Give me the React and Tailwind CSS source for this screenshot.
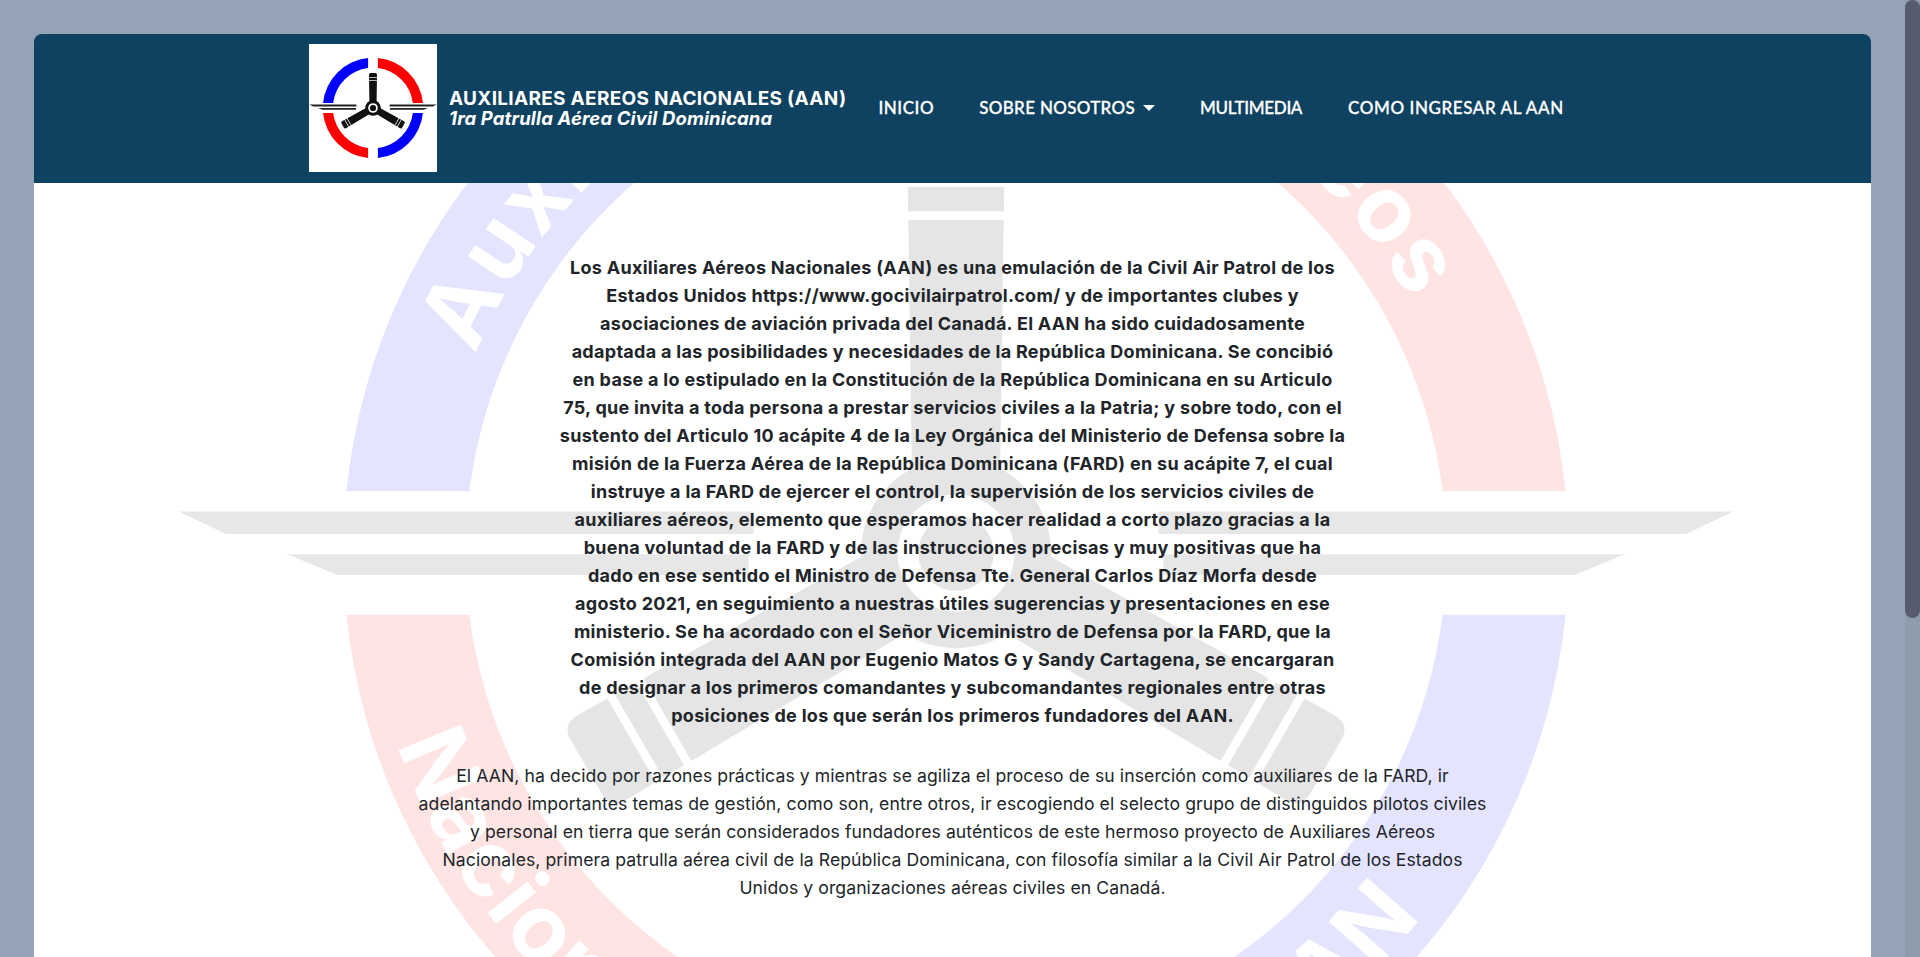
import React from "react";

const boldLines = [
  "Los Auxiliares Aéreos Nacionales (AAN) es una emulación de la Civil Air Patrol de los",
  "Estados Unidos https://www.gocivilairpatrol.com/ y de importantes clubes y",
  "asociaciones de aviación privada del Canadá. El AAN ha sido cuidadosamente",
  "adaptada a las posibilidades y necesidades de la República Dominicana. Se concibió",
  "en base a lo estipulado en la Constitución de la República Dominicana en su Articulo",
  "75, que invita a toda persona a prestar servicios civiles a la Patria; y sobre todo, con el",
  "sustento del Articulo 10 acápite 4 de la Ley Orgánica del Ministerio de Defensa sobre la",
  "misión de la Fuerza Aérea de la República Dominicana (FARD) en su acápite 7, el cual",
  "instruye a la FARD de ejercer el control, la supervisión de los servicios civiles de",
  "auxiliares aéreos, elemento que esperamos hacer realidad a corto plazo gracias a la",
  "buena voluntad de la FARD y de las instrucciones precisas y muy positivas que ha",
  "dado en ese sentido el Ministro de Defensa Tte. General Carlos Díaz Morfa desde",
  "agosto 2021, en seguimiento a nuestras útiles sugerencias y presentaciones en ese",
  "ministerio. Se ha acordado con el Señor Viceministro de Defensa por la FARD, que la",
  "Comisión integrada del AAN por Eugenio Matos G y Sandy Cartagena, se encargaran",
  "de designar a los primeros comandantes y subcomandantes regionales entre otras",
  "posiciones de los que serán los primeros fundadores del AAN.",
];

const normalLines = [
  "El AAN, ha decido por razones prácticas y mientras se agiliza el proceso de su inserción como auxiliares de la FARD, ir",
  "adelantando importantes temas de gestión, como son, entre otros, ir escogiendo el selecto grupo de distinguidos pilotos civiles",
  "y personal en tierra que serán considerados fundadores auténticos de este hermoso proyecto de Auxiliares Aéreos",
  "Nacionales, primera patrulla aérea civil de la República Dominicana, con filosofía similar a la Civil Air Patrol de los Estados",
  "Unidos y organizaciones aéreas civiles en Canadá.",
];

const ringSegment = (sx, sy) => {
  const R = 50.2;
  const r = 40.2;
  const dx = 4.9;
  const dy = 5.05;
  const sweep = sx * sy > 0 ? 0 : 1;
  const at = (x, y) => `${(64 + sx * x).toFixed(2)} ${(64 + sy * y).toFixed(2)}`;
  const off = (rad, d) => Math.sqrt(rad * rad - d * d);
  return `M${at(dx, off(R, dx))} A${R} ${R} 0 0 ${sweep} ${at(off(R, dy), dy)} L${at(off(r, dy), dy)} A${r} ${r} 0 0 ${1 - sweep} ${at(dx, off(r, dx))} Z`;
};

const Blade = ({ angle, fill }) => (
  <g transform={`rotate(${angle} 64 64)`}>
    <path fill={fill} d="M60 30.5 q0 -1.5 1.5 -1.5 h5 q1.5 0 1.5 1.5 L67.6 58 H60.4 Z" />
    <rect x="59" y="33.3" width="10" height="0.7" fill="#fff" />
    <rect x="59" y="36" width="10" height="0.7" fill="#fff" />
  </g>
);

const Emblem = ({ className, withText }) => (
  <svg viewBox="0 0 128 128" className={className}>
    <path fill="#0000ff" d={ringSegment(-1, -1)} />
    <path fill="#ff0000" d={ringSegment(1, -1)} />
    <path fill="#ff0000" d={ringSegment(-1, 1)} />
    <path fill="#0000ff" d={ringSegment(1, 1)} />

    {/* wings */}
    <g fill="#222">
      <path d="M0.3 60.6 H47.4 V62.44 H4.2 Z" />
      <path d="M127.7 60.6 H80.6 V62.44 H123.8 Z" />
      <path d="M9.2 64.1 H47 V65.8 H13.3 Z" />
      <path d="M118.8 64.1 H81 V65.8 H114.7 Z" />
    </g>

    <Blade angle={0} fill="#111" />
    <Blade angle={120} fill="#111" />
    <Blade angle={240} fill="#111" />
    <circle cx="64" cy="64" r="7.8" fill="#111" />
    <circle cx="64" cy="64" r="4.8" fill="#fff" />
    <circle cx="64" cy="64" r="3.1" fill="#111" />

    {withText && (
      <g fill="#fff" fontFamily="Inter, 'Liberation Sans', sans-serif" fontWeight="700" fontSize="7.6" textRendering="geometricPrecision">
        <path id="arc-top" fill="none" d="M21.4 64 A42.6 42.6 0 0 1 106.6 64" />
        <path id="arc-bottom" fill="none" d="M15.6 64 A48.4 48.4 0 0 0 112.4 64" />
        <text letterSpacing="0.2">
          <textPath href="#arc-top" startOffset="12.5%">Auxiliares</textPath>
        </text>
        <text textAnchor="end" letterSpacing="0.2">
          <textPath href="#arc-top" startOffset="84%">Aereos</textPath>
        </text>
        <text letterSpacing="0.2">
          <textPath href="#arc-bottom" startOffset="10.5%">Nacionales</textPath>
        </text>
        <text textAnchor="end" letterSpacing="0.2">
          <textPath href="#arc-bottom" startOffset="79%">AAN</textPath>
        </text>
      </g>
    )}
  </svg>
);

const App = () => {
  return (
    <div className="flex h-screen overflow-hidden bg-[#94a3b8]">
      <div className="min-w-0 flex-1 px-[34px] pt-[34px]">
        <header className="flex h-[149px] items-center rounded-t-lg bg-[#0f4160] pl-[275px] text-white">
          <div className="mb-px h-[128px] w-[128px] shrink-0 bg-white">
            <Emblem className="h-full w-full" />
          </div>
          <div className="ml-[12px] whitespace-nowrap font-['Inter',sans-serif] font-bold leading-[20px]">
            <div className="text-[19px] tracking-[0.3px]">AUXILIARES AEREOS NACIONALES (AAN)</div>
            <div className="-mt-px text-[18.5px] italic tracking-[0.15px]">1ra Patrulla Aérea Civil Dominicana</div>
          </div>
          <nav className="mb-[2px] ml-[32px] flex items-center gap-[45px] whitespace-nowrap font-['Lato',sans-serif] text-[17px] font-medium leading-none [-webkit-text-stroke:0.3px_white]">
            <a className="tracking-[0.55px]">INICIO</a>
            <a className="flex items-center gap-[8px] tracking-[0.32px]">
              SOBRE NOSOTROS
              <span className="h-0 w-0 border-x-[6px] border-t-[6px] border-x-transparent border-t-white"></span>
            </a>
            <a className="tracking-[-0.34px]">MULTIMEDIA</a>
            <a className="ml-px tracking-[0.58px]">COMO INGRESAR AL AAN</a>
          </nav>
        </header>

        <main className="relative min-h-[1299px] overflow-hidden bg-white pt-[71px] text-center text-[#212529] font-['Inter',sans-serif] leading-[28px] whitespace-nowrap">
          <Emblem withText className="absolute left-[141px] top-[-411px] h-[1562px] w-[1562px] max-w-none opacity-10" />
          <p className="relative text-[18px] font-bold tracking-[0.29px]">
            {boldLines.map((line, i) => (
              <span key={i} className="block">{line}</span>
            ))}
          </p>
          <p className="relative mt-[32px] text-[17.6px] tracking-[0.08px]">
            {normalLines.map((line, i) => (
              <span key={i} className="block">{line}</span>
            ))}
          </p>
        </main>
      </div>
      {/* scrollbar, browser hides the real one here */}
      <div className="w-[15px] shrink-0 bg-[#8e9cae]">
        <div className="h-[618px] rounded-[8px] bg-[#565b6f]"></div>
      </div>
    </div>
  );
};

export default App;
